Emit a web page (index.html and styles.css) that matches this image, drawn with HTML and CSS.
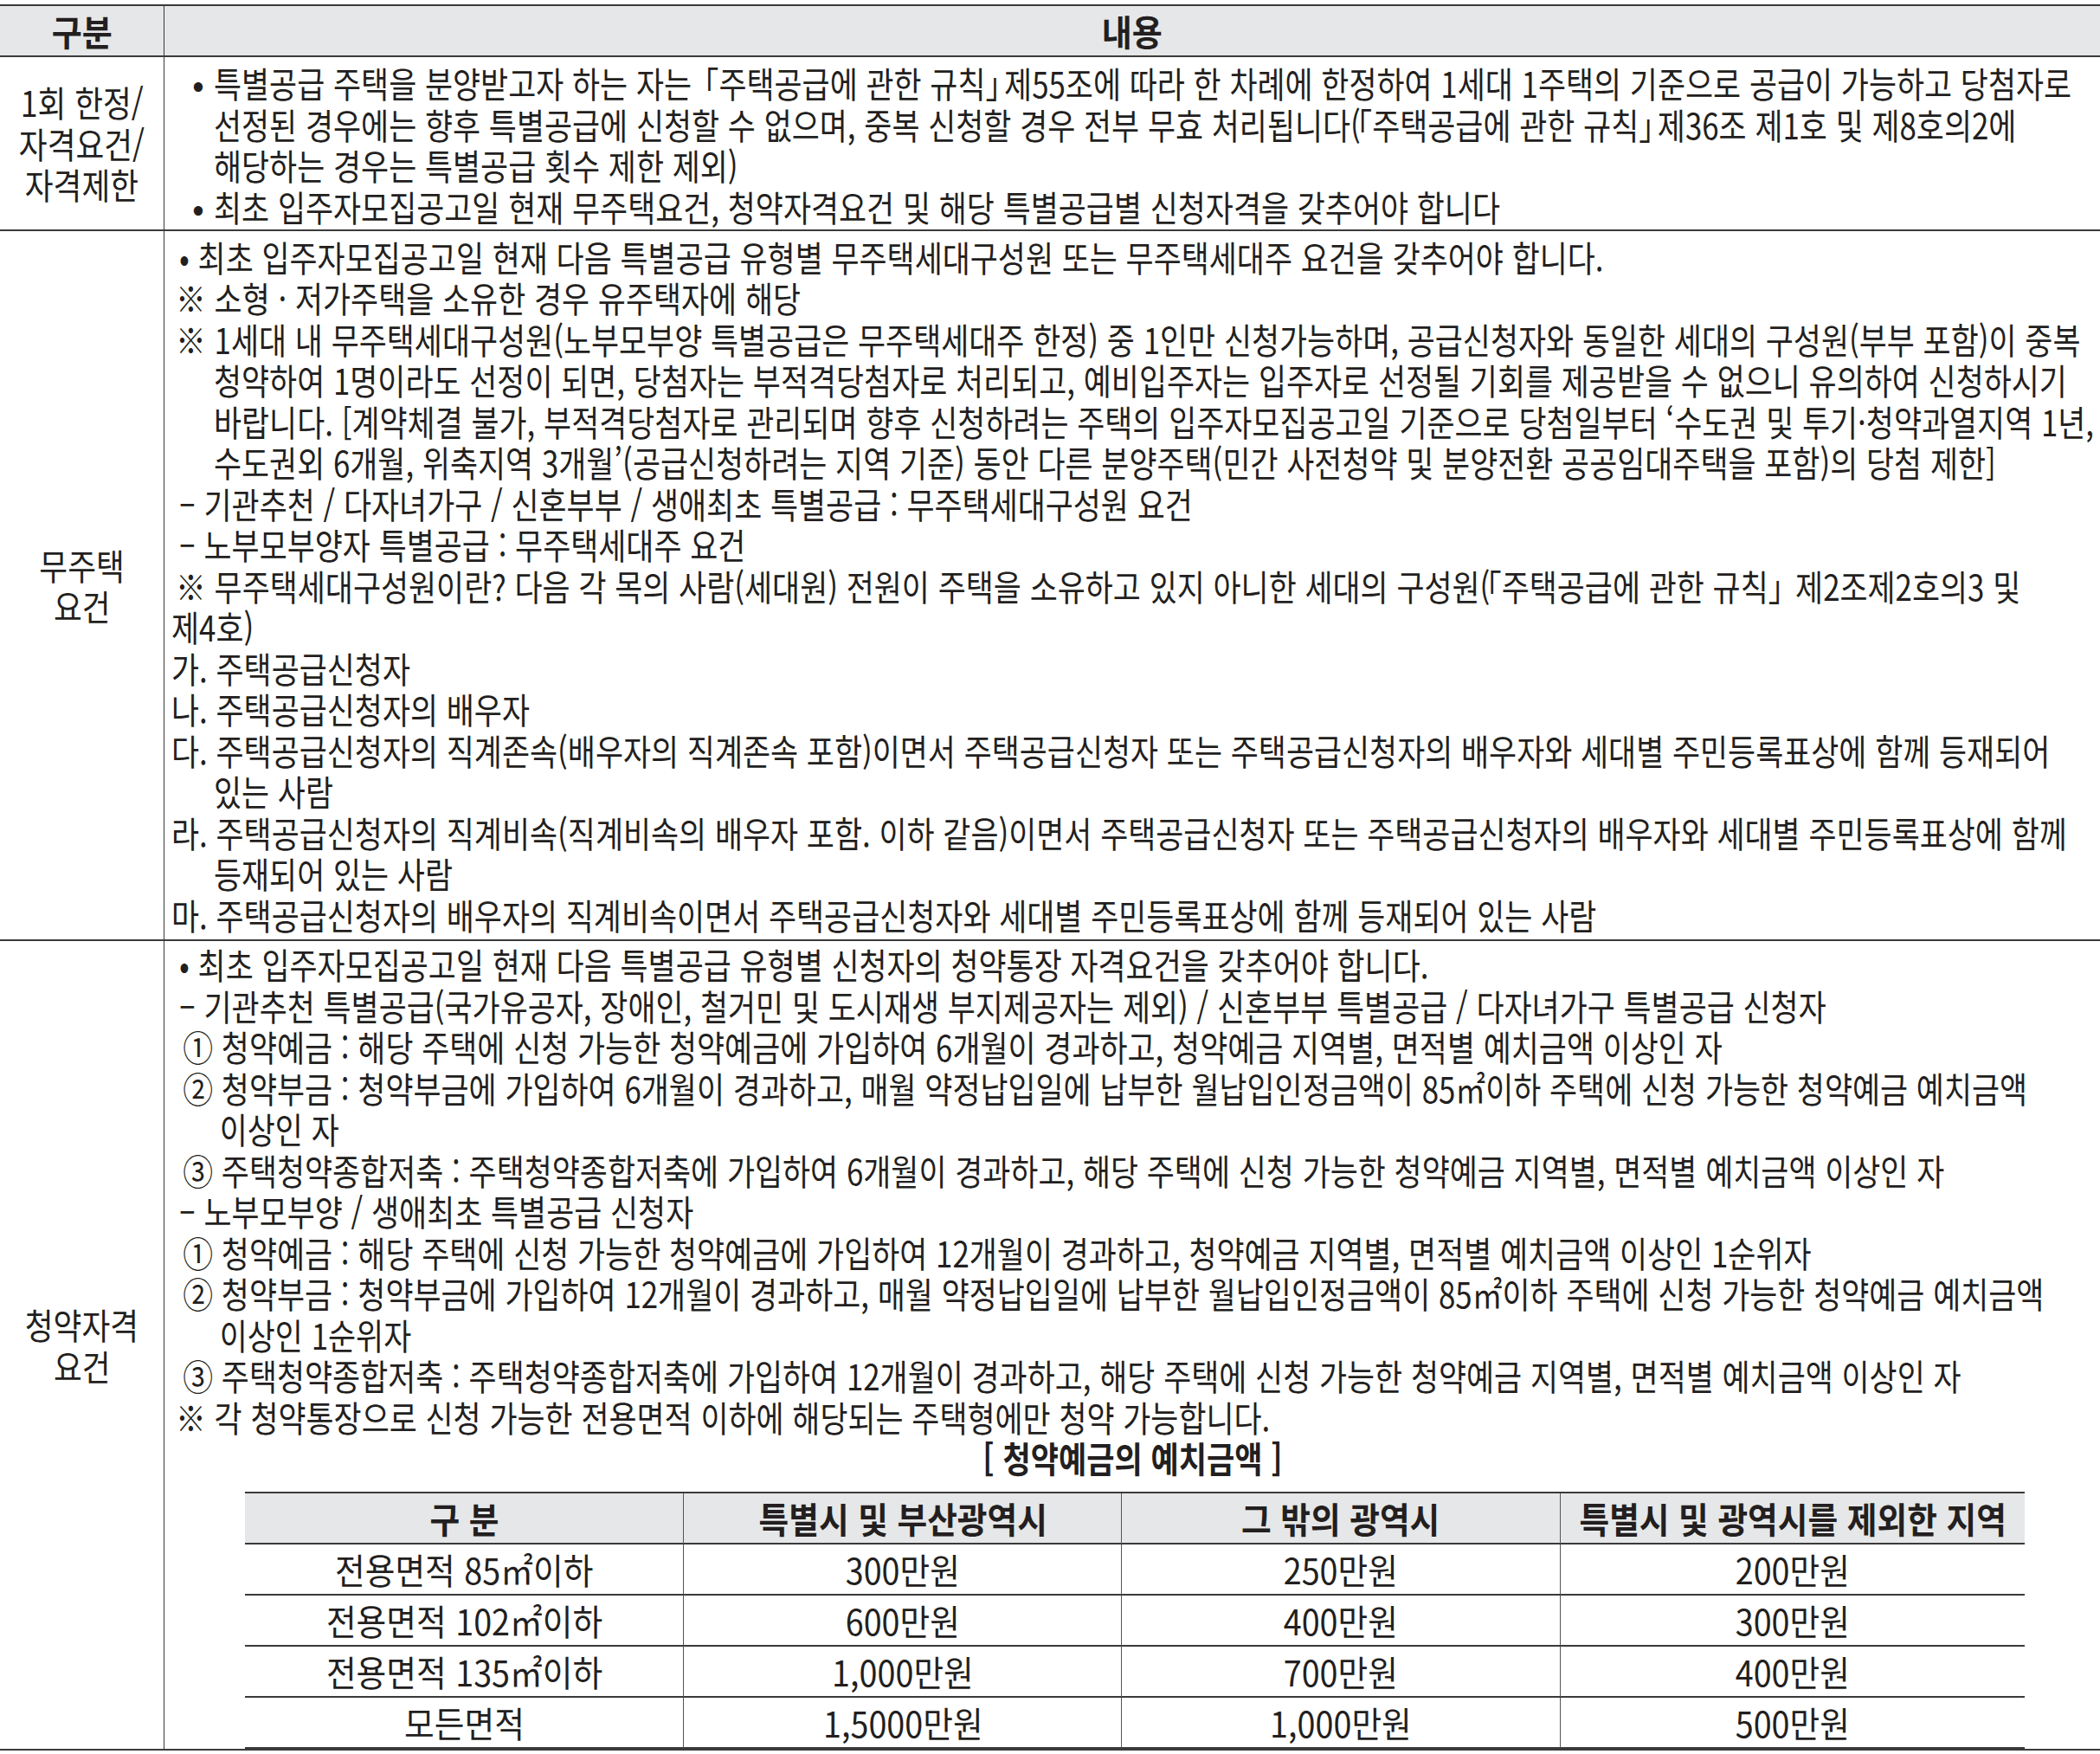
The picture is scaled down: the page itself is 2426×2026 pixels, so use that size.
FILE: index.html
```html
<!DOCTYPE html>
<html lang="ko">
<head>
<meta charset="utf-8">
<title>특별공급 자격요건</title>
<link rel="stylesheet" href="styles.css">
</head>
<body>
<div class="sheet">
  <div class="row head">
    <div class="lab"><span class="sx hb">구분</span></div>
    <div class="con center"><span class="sx hb">내용</span></div>
  </div>

  <div class="row r1">
    <div class="lab">
      <div class="lbl"><span class="sx lt">1회 한정/</span><span class="sx lt">자격요건/</span><span class="sx lt">자격제한</span></div>
    </div>
    <div class="con">
      <div class="bl">
        <span class="dot">•</span>
        <div class="tx">
          <div class="ln">특별공급 주택을 분양받고자 하는 자는 <span class="ob">「</span>주택공급에 관한 규칙<span class="cb">」</span>제55조에 따라 한 차례에 한정하여 1세대 1주택의 기준으로 공급이 가능하고 당첨자로</div>
          <div class="ln">선정된 경우에는 향후 특별공급에 신청할 수 없으며, 중복 신청할 경우 전부 무효 처리됩니다(<span class="ob2">「</span>주택공급에 관한 규칙<span class="cb">」</span>제36조 제1호 및 제8호의2에</div>
          <div class="ln">해당하는 경우는 특별공급 횟수 제한 제외)</div>
        </div>
      </div>
      <div class="bl">
        <span class="dot">•</span>
        <div class="tx">
          <div class="ln">최초 입주자모집공고일 현재 무주택요건, 청약자격요건 및 해당 특별공급별 신청자격을 갖추어야 합니다</div>
        </div>
      </div>
    </div>
  </div>

  <div class="row r2">
    <div class="lab">
      <div class="lbl"><span class="sx lt">무주택</span><span class="sx lt">요건</span></div>
    </div>
    <div class="con">
      <div class="ln">• 최초 입주자모집공고일 현재 다음 특별공급 유형별 무주택세대구성원 또는 무주택세대주 요건을 갖추어야 합니다.</div>
      <div class="ln rm">※ 소형 · 저가주택을 소유한 경우 유주택자에 해당</div>
      <div class="ln rm">※ 1세대 내 무주택세대구성원(노부모부양 특별공급은 무주택세대주 한정) 중 1인만 신청가능하며, 공급신청자와 동일한 세대의 구성원(부부 포함)이 중복</div>
      <div class="ln ind">청약하여 1명이라도 선정이 되면, 당첨자는 부적격당첨자로 처리되고, 예비입주자는 입주자로 선정될 기회를 제공받을 수 없으니 유의하여 신청하시기</div>
      <div class="ln ind">바랍니다. [계약체결 불가, 부적격당첨자로 관리되며 향후 신청하려는 주택의 입주자모집공고일 기준으로 당첨일부터 ‘수도권 및 투기·청약과열지역 1년,</div>
      <div class="ln ind">수도권외 6개월, 위축지역 3개월’(공급신청하려는 지역 기준) 동안 다른 분양주택(민간 사전청약 및 분양전환 공공임대주택을 포함)의 당첨 제한]</div>
      <div class="ln">– 기관추천 / 다자녀가구 / 신혼부부 / 생애최초 특별공급 : 무주택세대구성원 요건</div>
      <div class="ln">– 노부모부양자 특별공급 : 무주택세대주 요건</div>
      <div class="ln rm">※ 무주택세대구성원이란? 다음 각 목의 사람(세대원) 전원이 주택을 소유하고 있지 아니한 세대의 구성원(<span class="ob2">「</span>주택공급에 관한 규칙<span class="cb">」</span> 제2조제2호의3 및</div>
      <div class="ln out">제4호)</div>
      <div class="ln out">가. 주택공급신청자</div>
      <div class="ln out">나. 주택공급신청자의 배우자</div>
      <div class="ln out">다. 주택공급신청자의 직계존속(배우자의 직계존속 포함)이면서 주택공급신청자 또는 주택공급신청자의 배우자와 세대별 주민등록표상에 함께 등재되어</div>
      <div class="ln ind">있는 사람</div>
      <div class="ln out">라. 주택공급신청자의 직계비속(직계비속의 배우자 포함. 이하 같음)이면서 주택공급신청자 또는 주택공급신청자의 배우자와 세대별 주민등록표상에 함께</div>
      <div class="ln ind">등재되어 있는 사람</div>
      <div class="ln out">마. 주택공급신청자의 배우자의 직계비속이면서 주택공급신청자와 세대별 주민등록표상에 함께 등재되어 있는 사람</div>
    </div>
  </div>

  <div class="row r3">
    <div class="lab">
      <div class="lbl"><span class="sx lt">청약자격</span><span class="sx lt">요건</span></div>
    </div>
    <div class="con">
      <div class="ln">• 최초 입주자모집공고일 현재 다음 특별공급 유형별 신청자의 청약통장 자격요건을 갖추어야 합니다.</div>
      <div class="ln">– 기관추천 특별공급(국가유공자, 장애인, 철거민 및 도시재생 부지제공자는 제외) / 신혼부부 특별공급 / 다자녀가구 특별공급 신청자</div>
      <div class="ln num">① 청약예금 : 해당 주택에 신청 가능한 청약예금에 가입하여 6개월이 경과하고, 청약예금 지역별, 면적별 예치금액 이상인 자</div>
      <div class="ln num">② 청약부금 : 청약부금에 가입하여 6개월이 경과하고, 매월 약정납입일에 납부한 월납입인정금액이 85㎡이하 주택에 신청 가능한 청약예금 예치금액</div>
      <div class="ln ind2">이상인 자</div>
      <div class="ln num">③ 주택청약종합저축 : 주택청약종합저축에 가입하여 6개월이 경과하고, 해당 주택에 신청 가능한 청약예금 지역별, 면적별 예치금액 이상인 자</div>
      <div class="ln">– 노부모부양 / 생애최초 특별공급 신청자</div>
      <div class="ln num">① 청약예금 : 해당 주택에 신청 가능한 청약예금에 가입하여 12개월이 경과하고, 청약예금 지역별, 면적별 예치금액 이상인 1순위자</div>
      <div class="ln num">② 청약부금 : 청약부금에 가입하여 12개월이 경과하고, 매월 약정납입일에 납부한 월납입인정금액이 85㎡이하 주택에 신청 가능한 청약예금 예치금액</div>
      <div class="ln ind2">이상인 1순위자</div>
      <div class="ln num">③ 주택청약종합저축 : 주택청약종합저축에 가입하여 12개월이 경과하고, 해당 주택에 신청 가능한 청약예금 지역별, 면적별 예치금액 이상인 자</div>
      <div class="ln rm">※ 각 청약통장으로 신청 가능한 전용면적 이하에 해당되는 주택형에만 청약 가능합니다.</div>
      <div class="title"><span class="sx tb">[ 청약예금의 예치금액 ]</span></div>

      <div class="dep">
        <div class="dh"><span class="sx db">구 분</span></div>
        <div class="dh"><span class="sx db">특별시 및 부산광역시</span></div>
        <div class="dh"><span class="sx db">그 밖의 광역시</span></div>
        <div class="dh"><span class="sx db">특별시 및 광역시를 제외한 지역</span></div>

        <div class="dc"><span class="sx dt">전용면적 85㎡이하</span></div>
        <div class="dc"><span class="sx dt">300만원</span></div>
        <div class="dc"><span class="sx dt">250만원</span></div>
        <div class="dc"><span class="sx dt">200만원</span></div>

        <div class="dc"><span class="sx dt">전용면적 102㎡이하</span></div>
        <div class="dc"><span class="sx dt">600만원</span></div>
        <div class="dc"><span class="sx dt">400만원</span></div>
        <div class="dc"><span class="sx dt">300만원</span></div>

        <div class="dc"><span class="sx dt">전용면적 135㎡이하</span></div>
        <div class="dc"><span class="sx dt">1,000만원</span></div>
        <div class="dc"><span class="sx dt">700만원</span></div>
        <div class="dc"><span class="sx dt">400만원</span></div>

        <div class="dc"><span class="sx dt">모든면적</span></div>
        <div class="dc"><span class="sx dt">1,5000만원</span></div>
        <div class="dc"><span class="sx dt">1,000만원</span></div>
        <div class="dc"><span class="sx dt">500만원</span></div>
      </div>
    </div>
  </div>
</div>
</body>
</html>
```

FILE: styles.css
```css
html, body {
  margin: 0;
  padding: 0;
  background: #ffffff;
  overflow: hidden;
}

body {
  font-family: "Noto Sans CJK KR", "Noto Sans", sans-serif;
  font-size: 41px;
  color: #231f20;
  line-height: 47.5px;
}

.sheet {
  margin-top: 5px;
  border-top: 2px solid #3a3a3a;
}

.row {
  display: flex;
  border-bottom: 2px solid #3a3a3a;
}

.head {
  background: #e6e7e8;
  height: 57px;
}

.lab {
  flex: none;
  width: 189px;
  border-right: 1px solid #3a3a3a;
  display: flex;
  align-items: center;
  justify-content: center;
}

.con {
  flex: 1;
  min-width: 0;
}

.center {
  display: flex;
  align-items: center;
  justify-content: center;
}

.sx {
  display: inline-block;
  white-space: nowrap;
  transform-origin: 50% 50%;
}

.hb {
  font-weight: 700;
  transform: scaleX(0.93);
}

.lt {
  transform: scaleX(0.87);
}

.tb {
  font-weight: 700;
  transform: scaleX(0.855);
}

.db {
  font-weight: 700;
  transform: scaleX(0.92);
}

.dt {
  transform: scaleX(0.92);
}

.lbl {
  display: flex;
  flex-direction: column;
  align-items: center;
}

.ln {
  height: 47.5px;
  white-space: nowrap;
  transform: scaleX(0.85);
  transform-origin: 0 50%;
}

.ob {
  margin-left: -0.38em;
}

.ob2 {
  margin-left: -0.12em;
}

.cb {
  margin-right: -0.38em;
}

/* row 1 */
.r1 .con {
  padding: 6px 0 3px 32px;
}

.bl {
  display: flex;
}

.dot {
  flex: none;
  width: 25px;
}

.tx {
  flex: 1;
  min-width: 0;
}

/* row 2 */
.r2 .con {
  padding: 5.5px 0 5px 17px;
}

.rm {
  margin-left: -4px;
}

.ind {
  padding-left: 47px;
}

.out {
  margin-left: -9px;
}

/* row 3 */
.r3 .con {
  padding: 3px 0 0 17px;
}

.num {
  padding-left: 5px;
}

.ind2 {
  padding-left: 55px;
}

.title {
  height: 47.5px;
  text-align: center;
  margin-left: -17px;
}

.dep {
  display: grid;
  grid-template-columns: repeat(4, 1fr);
  width: 2056px;
  margin: 15.5px 0 0 76px;
  border-top: 2px solid #3a3a3a;
}

.dh,
.dc {
  height: 57px;
  display: flex;
  align-items: center;
  justify-content: center;
  border-bottom: 2px solid #3a3a3a;
  border-left: 1px solid #555555;
}

.dh {
  background: #e6e7e8;
}

.dh:nth-child(4n+1),
.dc:nth-child(4n+1) {
  border-left: none;
}
```
